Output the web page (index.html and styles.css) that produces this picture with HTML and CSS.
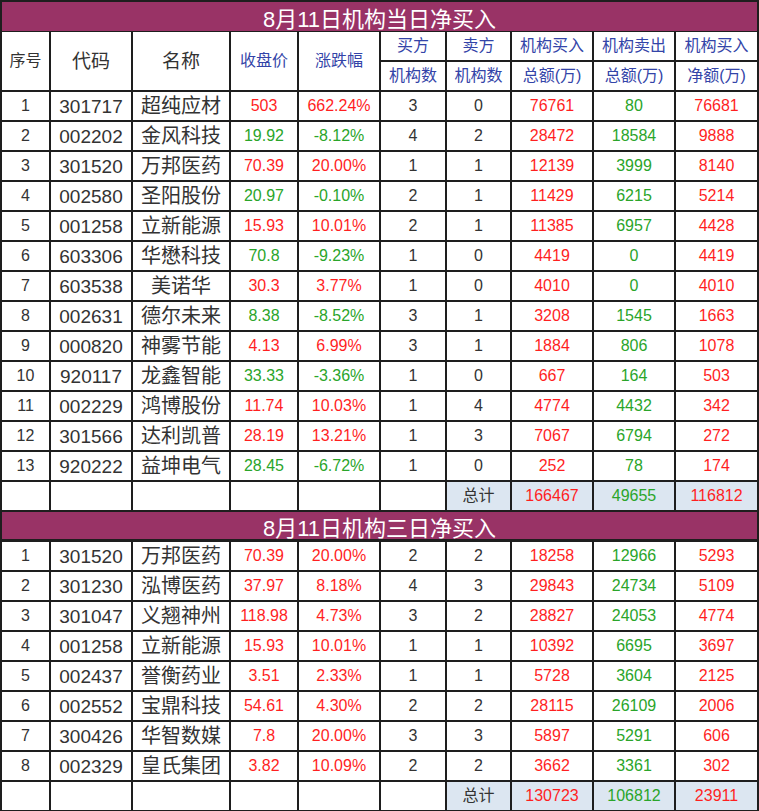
FILE: index.html
```html
<!DOCTYPE html>
<html lang="zh-CN">
<head>
<meta charset="utf-8">
<title>8月11日机构净买入</title>
<link rel="stylesheet" href="styles.css">
</head>
<body>
<div class="sheet">
  <div class="title">8月11日机构当日净买入</div>

  <div class="c hd dark span2">序号</div>
  <div class="c hd dark big span2">代码</div>
  <div class="c hd dark big span2">名称</div>
  <div class="c hd blue span2">收盘价</div>
  <div class="c hd blue span2">涨跌幅</div>
  <div class="c hd blue">买方</div>
  <div class="c hd blue">卖方</div>
  <div class="c hd blue">机构买入</div>
  <div class="c hd blue">机构卖出</div>
  <div class="c hd blue">机构买入</div>
  <div class="c hd blue">机构数</div>
  <div class="c hd blue">机构数</div>
  <div class="c hd blue">总额(万)</div>
  <div class="c hd blue">总额(万)</div>
  <div class="c hd blue">净额(万)</div>

  <div class="c">1</div><div class="c code">301717</div><div class="c name">超纯应材</div><div class="c r">503</div><div class="c r">662.24%</div><div class="c">3</div><div class="c">0</div><div class="c r">76761</div><div class="c g">80</div><div class="c r">76681</div>
  <div class="c">2</div><div class="c code">002202</div><div class="c name">金风科技</div><div class="c g">19.92</div><div class="c g">-8.12%</div><div class="c">4</div><div class="c">2</div><div class="c r">28472</div><div class="c g">18584</div><div class="c r">9888</div>
  <div class="c">3</div><div class="c code">301520</div><div class="c name">万邦医药</div><div class="c r">70.39</div><div class="c r">20.00%</div><div class="c">1</div><div class="c">1</div><div class="c r">12139</div><div class="c g">3999</div><div class="c r">8140</div>
  <div class="c">4</div><div class="c code">002580</div><div class="c name">圣阳股份</div><div class="c g">20.97</div><div class="c g">-0.10%</div><div class="c">2</div><div class="c">1</div><div class="c r">11429</div><div class="c g">6215</div><div class="c r">5214</div>
  <div class="c">5</div><div class="c code">001258</div><div class="c name">立新能源</div><div class="c r">15.93</div><div class="c r">10.01%</div><div class="c">2</div><div class="c">1</div><div class="c r">11385</div><div class="c g">6957</div><div class="c r">4428</div>
  <div class="c">6</div><div class="c code">603306</div><div class="c name">华懋科技</div><div class="c g">70.8</div><div class="c g">-9.23%</div><div class="c">1</div><div class="c">0</div><div class="c r">4419</div><div class="c g">0</div><div class="c r">4419</div>
  <div class="c">7</div><div class="c code">603538</div><div class="c name">美诺华</div><div class="c r">30.3</div><div class="c r">3.77%</div><div class="c">1</div><div class="c">0</div><div class="c r">4010</div><div class="c g">0</div><div class="c r">4010</div>
  <div class="c">8</div><div class="c code">002631</div><div class="c name">德尔未来</div><div class="c g">8.38</div><div class="c g">-8.52%</div><div class="c">3</div><div class="c">1</div><div class="c r">3208</div><div class="c g">1545</div><div class="c r">1663</div>
  <div class="c">9</div><div class="c code">000820</div><div class="c name">神雾节能</div><div class="c r">4.13</div><div class="c r">6.99%</div><div class="c">3</div><div class="c">1</div><div class="c r">1884</div><div class="c g">806</div><div class="c r">1078</div>
  <div class="c">10</div><div class="c code">920117</div><div class="c name">龙鑫智能</div><div class="c g">33.33</div><div class="c g">-3.36%</div><div class="c">1</div><div class="c">0</div><div class="c r">667</div><div class="c g">164</div><div class="c r">503</div>
  <div class="c">11</div><div class="c code">002229</div><div class="c name">鸿博股份</div><div class="c r">11.74</div><div class="c r">10.03%</div><div class="c">1</div><div class="c">4</div><div class="c r">4774</div><div class="c g">4432</div><div class="c r">342</div>
  <div class="c">12</div><div class="c code">301566</div><div class="c name">达利凯普</div><div class="c r">28.19</div><div class="c r">13.21%</div><div class="c">1</div><div class="c">3</div><div class="c r">7067</div><div class="c g">6794</div><div class="c r">272</div>
  <div class="c">13</div><div class="c code">920222</div><div class="c name">益坤电气</div><div class="c g">28.45</div><div class="c g">-6.72%</div><div class="c">1</div><div class="c">0</div><div class="c r">252</div><div class="c g">78</div><div class="c r">174</div>

  <div class="c"></div><div class="c"></div><div class="c"></div><div class="c"></div><div class="c"></div><div class="c"></div>
  <div class="c tot">总计</div><div class="c tot r">166467</div><div class="c tot g">49655</div><div class="c tot r">116812</div>

  <div class="title title2">8月11日机构三日净买入</div>

  <div class="c">1</div><div class="c code">301520</div><div class="c name">万邦医药</div><div class="c r">70.39</div><div class="c r">20.00%</div><div class="c">2</div><div class="c">2</div><div class="c r">18258</div><div class="c g">12966</div><div class="c r">5293</div>
  <div class="c">2</div><div class="c code">301230</div><div class="c name">泓博医药</div><div class="c r">37.97</div><div class="c r">8.18%</div><div class="c">4</div><div class="c">3</div><div class="c r">29843</div><div class="c g">24734</div><div class="c r">5109</div>
  <div class="c">3</div><div class="c code">301047</div><div class="c name">义翘神州</div><div class="c r">118.98</div><div class="c r">4.73%</div><div class="c">3</div><div class="c">2</div><div class="c r">28827</div><div class="c g">24053</div><div class="c r">4774</div>
  <div class="c">4</div><div class="c code">001258</div><div class="c name">立新能源</div><div class="c r">15.93</div><div class="c r">10.01%</div><div class="c">1</div><div class="c">1</div><div class="c r">10392</div><div class="c g">6695</div><div class="c r">3697</div>
  <div class="c">5</div><div class="c code">002437</div><div class="c name">誉衡药业</div><div class="c r">3.51</div><div class="c r">2.33%</div><div class="c">1</div><div class="c">1</div><div class="c r">5728</div><div class="c g">3604</div><div class="c r">2125</div>
  <div class="c">6</div><div class="c code">002552</div><div class="c name">宝鼎科技</div><div class="c r">54.61</div><div class="c r">4.30%</div><div class="c">2</div><div class="c">2</div><div class="c r">28115</div><div class="c g">26109</div><div class="c r">2006</div>
  <div class="c">7</div><div class="c code">300426</div><div class="c name">华智数媒</div><div class="c r">7.8</div><div class="c r">20.00%</div><div class="c">3</div><div class="c">3</div><div class="c r">5897</div><div class="c g">5291</div><div class="c r">606</div>
  <div class="c">8</div><div class="c code">002329</div><div class="c name">皇氏集团</div><div class="c r">3.82</div><div class="c r">10.09%</div><div class="c">2</div><div class="c">2</div><div class="c r">3662</div><div class="c g">3361</div><div class="c r">302</div>

  <div class="c"></div><div class="c"></div><div class="c"></div><div class="c"></div><div class="c"></div><div class="c"></div>
  <div class="c tot">总计</div><div class="c tot r">130723</div><div class="c tot g">106812</div><div class="c tot r">23911</div>
</div>
</body>
</html>
```

FILE: styles.css
```css
html, body {
  margin: 0;
  padding: 0;
  background: #ffffff;
}

.sheet {
  width: 759px;
  box-sizing: border-box;
  display: grid;
  grid-template-columns: 47px 80px 96px 66px 80px 64px 63px 80px 80px 81px;
  grid-auto-rows: 28px;
  gap: 2px;
  padding: 2px 2px 1px 2px;
  background: #1e1e1e;
  font-family: "Liberation Sans", "Noto Sans CJK SC", sans-serif;
  font-size: 16px;
  color: #333333;
}

.title {
  grid-column: 1 / -1;
  height: 29px;
  background: #993366;
  color: #ffffff;
  font-family: "Liberation Sans", "Noto Sans CJK SC", sans-serif;
  font-size: 22px;
  display: flex;
  align-items: center;
  justify-content: center;
}

.title2 {
  height: 27px;
}

.c {
  background: #ffffff;
  display: flex;
  align-items: center;
  justify-content: center;
  line-height: 1;
  white-space: nowrap;
}

.span2 {
  grid-row: span 2;
}

.hd {
  font-size: 16px;
}

.dark {
  color: #333333;
}

.big {
  font-size: 19px;
}

.blue {
  color: #3344a8;
}

.code {
  font-size: 19px;
}

.name {
  font-size: 20px;
}

.r {
  color: #ff1f1f;
}

.g {
  color: #2aa52a;
}

.tot {
  background: #dce6f1;
}
```
